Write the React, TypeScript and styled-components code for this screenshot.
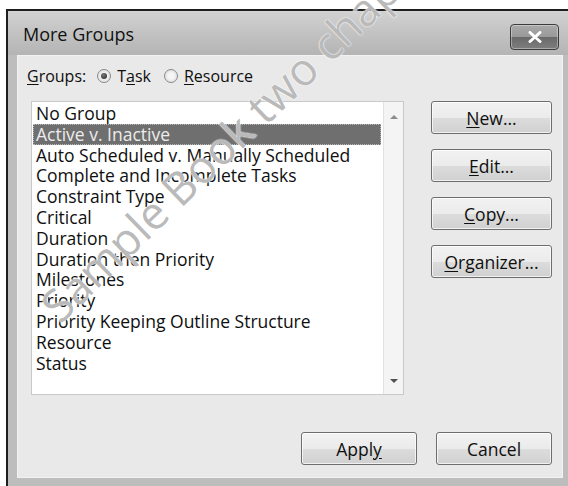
import React from 'react';
import styled, { createGlobalStyle } from 'styled-components';

const groups = [
  'No Group',
  'Active v. Inactive',
  'Auto Scheduled v. Manually Scheduled',
  'Complete and Incomplete Tasks',
  'Constraint Type',
  'Critical',
  'Duration',
  'Duration then Priority',
  'Milestones',
  'Priority',
  'Priority Keeping Outline Structure',
  'Resource',
  'Status',
];

const GlobalStyle = createGlobalStyle`
  html, body {
    margin: 0;
    background: #ffffff;
    overflow: hidden;
  }
  body {
    font-family: "Open Sans", "Noto Sans", sans-serif;
    color: #0f0f0f;
  }
`;

const Page = styled.div`
  position: relative;
  width: 568px;
  height: 486px;
  padding: 9px 0 0 6px;
  box-sizing: border-box;
  overflow: hidden;
`;

const Window = styled.div`
  width: 564px;
  box-sizing: border-box;
  display: flex;
  flex-direction: column;
  border-top: 2px solid #1e1e1e;
  border-left: 2px solid #1e1e1e;
  background: #bdbdbd;
`;

const TitleBar = styled.div`
  height: 44px;
  display: flex;
  align-items: center;
  justify-content: space-between;
  padding: 0 11px 0 15px;
  background: linear-gradient(#d2d2d2, #c4c4c4 45%, #b4b4b4);
`;

const Title = styled.span`
  font-size: 18px;
  color: #111111;
  margin-top: 2px;
`;

const CloseButton = styled.button`
  width: 49px;
  height: 26px;
  margin-top: 7px;
  padding: 0;
  border: 1px solid #3c3c3c;
  border-radius: 4px;
  background: linear-gradient(#a9a9a9, #9a9a9a 48%, #6a6a6a 52%, #7e7e7e);
  box-shadow: inset 0 0 0 1px rgba(255, 255, 255, 0.35);
  display: flex;
  align-items: center;
  justify-content: center;
`;

const Panel = styled.div`
  margin: 0 7px 8px 9px;
  height: 423px;
  box-sizing: border-box;
  background: #e9e9e9;
  border: 1px solid #f2f2f2;
  padding: 10px 10px 12px 13px;
  display: grid;
  grid-template-columns: 373px 121px;
  grid-template-rows: 20px 294px 1fr;
  column-gap: 27px;
  row-gap: 15px;
`;

const GroupsRow = styled.div`
  grid-column: 1 / 3;
  display: flex;
  align-items: center;
  margin-left: -4px;
  font-size: 16px;
`;

const Label = styled.span`
  margin-right: 11px;
`;

const RadioOption = styled.label`
  display: flex;
  align-items: center;
  gap: 6px;
  margin-right: 13px;
`;

const RadioDot = styled.span<{ $checked?: boolean }>`
  width: 12px;
  height: 12px;
  border-radius: 50%;
  border: 1px solid #8a8a8a;
  background: radial-gradient(circle, #f6f6f6 30%, #d4d4d4 100%);
  display: flex;
  align-items: center;
  justify-content: center;
  &::after {
    content: '';
    display: ${p => (p.$checked ? 'block' : 'none')};
    width: 6px;
    height: 6px;
    border-radius: 50%;
    background: radial-gradient(circle at 40% 35%, #7a7a7a, #1e1e1e);
  }
`;

const Key = styled.span`
  text-decoration: underline;
  text-underline-offset: 2px;
`;

const ListBox = styled.div`
  display: flex;
  border: 1px solid #c9c9c9;
  background: #ffffff;
  box-sizing: border-box;
`;

const Items = styled.ul`
  flex: 1;
  list-style: none;
  margin: 0;
  padding: 1px 2px 0 1px;
`;

const Item = styled.li<{ $selected?: boolean }>`
  height: 20.8px;
  line-height: 19px;
  padding-left: 2px;
  font-size: 17.5px;
  white-space: nowrap;
  box-sizing: border-box;
  border: 1px dotted ${p => (p.$selected ? '#b8b8b8' : 'transparent')};
  background: ${p => (p.$selected ? '#6f6f6f' : 'transparent')};
  color: ${p => (p.$selected ? '#ececec' : '#0f0f0f')};
`;

const ScrollTrack = styled.div`
  width: 19px;
  border-left: 1px solid #e2e2e2;
  background: #f4f4f4;
  display: flex;
  flex-direction: column;
  justify-content: space-between;
  align-items: center;
  padding: 13px 0 11px;
`;

const Arrow = styled.span<{ $down?: boolean }>`
  width: 0;
  height: 0;
  border-left: 4px solid transparent;
  border-right: 4px solid transparent;
  ${p =>
    p.$down
      ? 'border-top: 4px solid #505050;'
      : 'border-bottom: 4px solid #8c8c8c;'}
`;

const SideButtons = styled.div`
  display: flex;
  flex-direction: column;
  gap: 15px;
`;

const Button = styled.button<{ $width?: number }>`
  width: ${p => p.$width ?? 121}px;
  height: 33px;
  padding: 0;
  border: 1px solid #6e6e6e;
  border-radius: 3px;
  background: linear-gradient(#f2f2f2, #ebebeb 50%, #dcdcdc 52%, #d0d0d0);
  box-shadow: inset 0 0 0 1px rgba(255, 255, 255, 0.7);
  font-family: "Open Sans", "Noto Sans", sans-serif;
  font-size: 17.5px;
  color: #0f0f0f;
`;

const Footer = styled.div`
  grid-column: 1 / 3;
  display: flex;
  justify-content: flex-end;
  align-items: flex-end;
  gap: 19px;
`;

const Watermark = styled.div`
  position: absolute;
  left: 48px;
  top: 282px;
  transform: rotate(-44deg);
  transform-origin: left center;
  font-family: "Open Sans", sans-serif;
  font-size: 45px;
  white-space: nowrap;
  color: rgba(155, 155, 155, 0.7);
  text-shadow: 0 0 1px #fff, 0 0 2px #fff;
  pointer-events: none;
`;

export default function App() {
  return (
    <Page>
      <GlobalStyle />
      <Window>
        <TitleBar>
          <Title>More Groups</Title>
          <CloseButton>
            <svg width="16" height="12" viewBox="0 0 16 12">
              <path d="M3 1.5 L13 10.5 M13 1.5 L3 10.5" stroke="#ffffff" strokeWidth="3" strokeLinecap="round" />
            </svg>
          </CloseButton>
        </TitleBar>
        <Panel>
          <GroupsRow>
            <Label><Key>G</Key>roups:</Label>
            <RadioOption>
              <RadioDot $checked />
              <span>T<Key>a</Key>sk</span>
            </RadioOption>
            <RadioOption>
              <RadioDot />
              <span><Key>R</Key>esource</span>
            </RadioOption>
          </GroupsRow>
          <ListBox>
            <Items>
              {groups.map((g, i) => (
                <Item key={g} $selected={i === 1}>{g}</Item>
              ))}
            </Items>
            <ScrollTrack>
              <Arrow />
              <Arrow $down />
            </ScrollTrack>
          </ListBox>
          <SideButtons>
            <Button><Key>N</Key>ew...</Button>
            <Button><Key>E</Key>dit...</Button>
            <Button><Key>C</Key>opy...</Button>
            <Button><Key>O</Key>rganizer...</Button>
          </SideButtons>
          <Footer>
            <Button $width={116}>Appl<Key>y</Key></Button>
            <Button $width={116}>Cancel</Button>
          </Footer>
        </Panel>
      </Window>
      <Watermark>Sample Book two chapters</Watermark>
    </Page>
  );
}
